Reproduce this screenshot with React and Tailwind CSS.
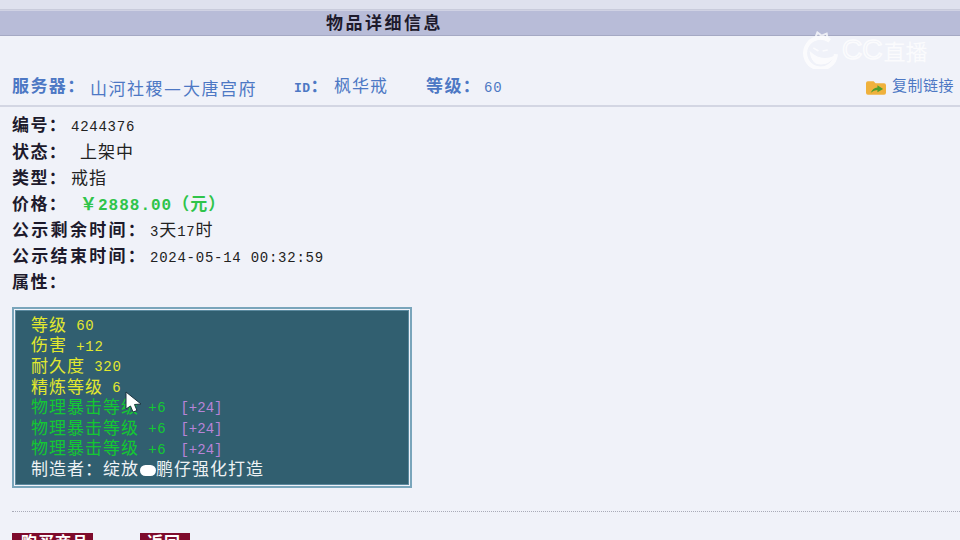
import React from 'react';

const font = '[font-family:"Liberation_Mono","Noto_Sans_CJK_SC",monospace]';

// the shot is stretched: CJK runs are twice as wide as latin runs
function T({ text, cjk = 'text-[17px] tracking-[1px]', latin = 'text-[14px] tracking-[0.75px]' }) {
  return text.split(/([\u2E80-\u9FFF\uFF00-\uFFEF]+)/).map((part, i) => {
    if (!part) return null;
    return (
      <span key={i} className={`whitespace-pre ${i % 2 ? cjk : latin}`}>{part}</span>
    );
  });
}

const label = 'text-[17px] tracking-[1.4px]';
const longLabel = 'text-[17px] tracking-[2.3px]';
const serverName = 'text-[17px] tracking-[1.5px]';

const info = [
  { label: '编号：', value: '4244376', w: 'w-[59px]' },
  { label: '状态：', value: '上架中', w: 'w-[68px]' },
  { label: '类型：', value: '戒指', w: 'w-[59px]' },
  { label: '价格：', value: '￥2888.00（元）', w: 'w-[68px]', price: true },
  { label: '公示剩余时间：', value: '3天17时', w: 'w-[138px]', long: true },
  { label: '公示结束时间：', value: '2024-05-14 00:32:59', w: 'w-[138px]', long: true },
  { label: '属性：', value: '', w: 'w-[59px]' },
];

const attrs = [
  { text: '等级 60', color: 'text-[#e2e82e]' },
  { text: '伤害 +12', color: 'text-[#e2e82e]' },
  { text: '耐久度 320', color: 'text-[#e2e82e]' },
  { text: '精炼等级 6', color: 'text-[#e2e82e]' },
  { text: '物理暴击等级 +6', color: 'text-[#14c832]', extra: '[+24]' },
  { text: '物理暴击等级 +6', color: 'text-[#14c832]', extra: '[+24]' },
  { text: '物理暴击等级 +6', color: 'text-[#14c832]', extra: '[+24]' },
];

function FolderIcon() {
  return (
    <svg width="20" height="14" viewBox="0 0 21 14" className="shrink-0">
      <path d="M0 2 Q0 0 2 0 H8 L10 2 H19 Q21 2 21 4 V12 Q21 14 19 14 H2 Q0 14 0 12 Z" fill="#efb13c" />
      <path d="M5 12 Q7 7 12 6.5 V4 L18 8 L12 11.5 V9 Q8 9 5 12 Z" fill="#4f9e2c" />
    </svg>
  );
}

function Watermark() {
  return (
    <div className="absolute left-[802px] top-[31px] flex items-center text-white opacity-75">
      <svg width="37" height="38" viewBox="0 0 36 36" fill="none" stroke="#fff">
        <path d="M13 6 L15 1 L19 4 L24 2 L25 7" strokeWidth="2" />
        <path d="M27 9 A15 15 0 1 0 33 22" strokeWidth="4" />
        <path d="M8 20 Q18 30 32 24 Q24 34 14 31 Q9 28 8 20 Z" fill="#fff" strokeWidth="1" />
        <path d="M11 16 L16 19 M20 19 L25 18" strokeWidth="1.5" />
      </svg>
      <span className="ml-[3px] text-[28px] leading-none text-transparent [-webkit-text-stroke:1.5px_#fff] [font-family:'Liberation_Sans',sans-serif]">CC</span>
      <span className="ml-[1px] text-[22px] leading-none [font-family:'Noto_Sans_CJK_SC',sans-serif]">直播</span>
    </div>
  );
}

export default function App() {
  return (
    <div className={`relative w-[960px] h-[540px] overflow-hidden bg-[#f0f2f9] text-[#222] ${font}`}>
      <div className="h-[9px] bg-[#dfe1ee] border-b border-[#c9cbdb] box-content" />
      <div className="h-[26px] bg-[#b8bcd8] border-t border-[#d0d2e4] border-b-[#a5a9c4] border-b flex items-center pt-[3px]">
        <h1 className="ml-[326px] font-bold text-[#1d1a2c]">
          <T text="物品详细信息" cjk="text-[17px] tracking-[2.5px]" />
        </h1>
      </div>

      <div className="mt-[38px] pl-[12px] h-[33px] pb-[3px] border-b-2 border-[#d3d6e3] flex items-center text-[#4d78c4]">
        <b className="w-[78px]"><T text="服务器：" cjk={label} /></b>
        <span className="w-[204px]">
          <T text="山河社稷" cjk={serverName} />
          <span className="inline-block w-[19px] text-[19px] [font-family:'Noto_Sans_CJK_SC',sans-serif]">—</span>
          <T text="大唐宫府" cjk={serverName} />
        </span>
        <b className="w-[40px]"><T text="ID：" cjk={label} latin="text-[13px] tracking-[0.5px]" /></b>
        <span className="w-[92px]"><T text="枫华戒" /></span>
        <b className="w-[58px]"><T text="等级：" cjk={label} /></b>
        <span><T text="60" /></span>
        <div className="ml-auto pr-[6px] flex items-center gap-[6px]">
          <FolderIcon />
          <T text="复制链接" cjk="text-[15px] tracking-[0.5px]" />
        </div>
      </div>

      <div className="mt-[7px] ml-[12px] flex flex-col">
        {info.map((row) => (
          <div key={row.label} className="h-[26.2px] flex items-center">
            <b className={`${row.w} shrink-0 text-[#1d1a2c]`}>
              <T text={row.label} cjk={row.long ? longLabel : label} />
            </b>
            {row.price ? (
              <span className="font-bold text-[#2fc44a]">
                <T text={row.value} latin="text-[16px] tracking-[1px]" />
              </span>
            ) : (
              <span><T text={row.value} /></span>
            )}
          </div>
        ))}
      </div>

      <div className="mt-[10px] ml-[12px] w-[400px] h-[181px] border-2 border-[#79a5bb] p-px">
        <div className="h-full border border-[#5b8a9f] bg-[#315f70] pl-[15px] pt-[5px]">
          {attrs.map((a, i) => (
            <div key={i} className={`h-[20.6px] flex items-center ${a.color}`}>
              <T text={a.text} />
              {a.extra && <span className="ml-[14px] text-[#b884d8] text-[14px]">{a.extra}</span>}
            </div>
          ))}
          <div className="h-[20.6px] flex items-center text-[#eef2f4]">
            <T text="制造者：绽放" />
            <span className="ml-[1px] w-[16px] h-[11px] rounded-full bg-white" />
            <T text="鹏仔强化打造" />
          </div>
        </div>
      </div>

      <div className="mt-[23px] mx-[12px] mr-0 border-t border-dotted border-[#a9abb8]" />

      <div className="mt-[21px] ml-[12px] flex gap-[47px] text-white font-bold">
        <div className="w-[81px] h-[20px] bg-[#7e0b2c] pl-[9px] pt-[3px] leading-[16px]"><T text="购买商品" cjk="text-[16px] tracking-[1px]" /></div>
        <div className="w-[50px] h-[20px] bg-[#7e0b2c] pl-[7px] pt-[3px] leading-[16px]"><T text="返回" cjk="text-[16px] tracking-[1px]" /></div>
      </div>

      <Watermark />

      <svg width="18" height="24" viewBox="0 0 18 24" className="absolute left-[125px] top-[391px]">
        <path d="M1 1 V18 L5.5 15 L8 21 L12 19.5 L9.5 13.5 L16 13 Z" fill="#fff" stroke="#1c3440" strokeWidth="1" />
      </svg>
    </div>
  );
}
